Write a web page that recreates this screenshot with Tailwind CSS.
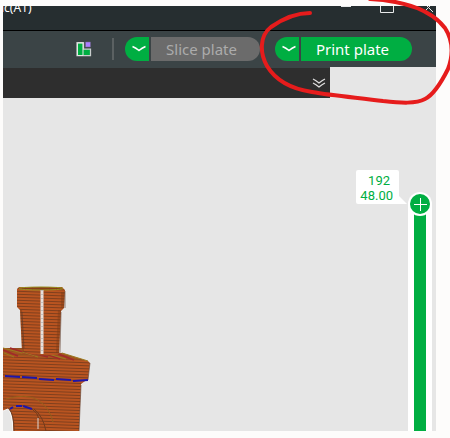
<!doctype html>
<html lang="en">
  <head>
    <meta charset="UTF-8" />
    <title>Print plate</title>
    <meta name="viewport" content="width=device-width, initial-scale=1.0" />
    <script src="https://cdn.jsdelivr.net/npm/@tailwindcss/browser@4"></script>
  </head>
  <body
    class="relative flex min-h-screen flex-col overflow-hidden bg-[#fdfcfb] pt-1.5 pr-3.5 pb-[7px] pl-[3px] font-['Noto_Sans',sans-serif]"
  >
    <div class="flex grow flex-col overflow-hidden bg-[#e6e6e6]">
      <header
        class="flex h-[25px] items-start justify-between overflow-hidden border-b border-black bg-[#262e30] text-white"
      >
        <h1 class="-mt-2 -ml-0.5 text-xs leading-5">ic(A1)</h1>
        <div class="flex gap-7">
          <button type="button" aria-label="Minimize">
            <svg class="block h-2 w-3" viewBox="0 0 12 8" fill="none" stroke="#e8eaea">
              <path d="M1 .5h10" />
            </svg>
          </button>
          <button type="button" aria-label="Maximize">
            <svg class="block h-2 w-3.5" viewBox="0 0 14 8" fill="none" stroke="#e8eaea">
              <path d="M.5 0v6.500h13V0" />
            </svg>
          </button>
          <button type="button" aria-label="Close" class="pr-0.5">
            <svg class="block h-2 w-3" viewBox="0 0 12 8" fill="none" stroke="#e8eaea">
              <path d="M2 6L6.500 1.500L11 6M5 0L6.500 1.500L8 0" />
            </svg>
          </button>
        </div>
      </header>

      <div class="flex h-9 items-center justify-end bg-[#3b4446] pr-6">
        <button type="button" aria-label="Assembly layout" class="mr-5">
          <svg class="block h-4 w-4" viewBox="0 0 16 16">
            <path
              d="M1 1.500h6.500v6.500h7v6.500H1z"
              fill="#00ae42"
              stroke="#c9cdcd"
              stroke-width="1.250"
            />
            <path d="M7 2v12.500H1.500V2z" fill="none" stroke="#e4e8e6" />
            <path d="M9.500 1h5v5h-5z" fill="#ac7cff" stroke="#6c6582" stroke-width=".5" />
          </svg>
        </button>
        <span class="mr-[11px] h-[22px] w-0.5 bg-[#5b6162]"></span>

        <div class="mr-[15px] flex h-6 gap-0.5">
          <button
            type="button"
            aria-label="Slice options"
            class="flex w-6 items-center justify-center rounded-l-full bg-[#00ae42]"
          >
            <svg class="ml-1 h-2 w-3.5" viewBox="0 0 14 8" fill="none" stroke="#fff" stroke-width="1.500">
              <path d="M.5 1.500Q4 3 7 5.500Q10 3 13.500 1.500" />
            </svg>
          </button>
          <button
            type="button"
            disabled
            class="w-[109px] rounded-r-full bg-[#6b6b6b] pr-2 text-[15px] leading-6 text-[#acacac]"
          >
            Slice plate
          </button>
        </div>

        <div class="flex h-6 gap-0.5">
          <button
            type="button"
            aria-label="Print options"
            class="flex w-6 items-center justify-center rounded-l-full bg-[#00ae42]"
          >
            <svg class="ml-1 h-2 w-3.5" viewBox="0 0 14 8" fill="none" stroke="#fff" stroke-width="1.500">
              <path d="M.5 1.500Q4 3 7 5.500Q10 3 13.500 1.500" />
            </svg>
          </button>
          <button
            type="button"
            class="w-[111px] rounded-r-full bg-[#00ae42] pr-2 text-[15px] leading-6 text-white"
          >
            Print plate
          </button>
        </div>
      </div>

      <div
        class="mr-[106px] flex h-[31px] items-center justify-end border-t border-[#3b4446] bg-[#2e2e2e] pr-1"
      >
        <button type="button" aria-label="Expand">
          <svg class="block h-3 w-3.5" viewBox="0 0 14 12" fill="none" stroke="#dedede" stroke-width="1.250">
            <path d="M1 2Q4 3.500 7 6Q10 3.500 13 2M1 6Q4 7.500 7 10Q10 7.500 13 6" />
          </svg>
        </button>
      </div>

      <main class="flex grow justify-between">
        <svg class="h-[146px] w-[90px] self-end" viewBox="3 285 90 146">
          <defs>
            <pattern id="layers" width="90" height="3" patternUnits="userSpaceOnUse" patternTransform="rotate(2)">
              <path d="M0 0h90v3H0z" fill="#b95420" />
              <path d="M0 2.500h90" stroke="#803f1d" />
            </pattern>
          </defs>
          <!-- tower body with the arch opening at the left edge -->
          <path
            d="M3 348L22 348L62 353L88 361L90 363L88 379L81 384L79 431H13Q14 412 8 409L3 411z"
            fill="url(#layers)"
          />
          <path d="M3 411L8 409Q12 412 13 431" fill="none" stroke="#f8f8f8" />
          <path d="M9 409Q14 414 14 431" fill="none" stroke="#6b3a20" />
          <!-- roof -->
          <path d="M3 348L22 348L62 353L86 361L50 358L3 355z" fill="#9a5520" opacity=".7" />
          <path d="M3 350L18 356M10 348L35 356M36 354L48 357M46 354L60 359M58 354L74 360" stroke="#a2282b" stroke-width="1.500" />
          <path d="M3 348L22 353M4 353L14 357M22 352L38 357M48 354L66 359M62 353L88 361" stroke="#9c7b20" />
          <!-- chimney -->
          <path d="M17 289L19 287H62L65 290L64 308L61 311L59 354Q40 358 22 351L20 310L17 307z" fill="url(#layers)" />
          <path d="M58 310H61L59 353H56zM61 292H65L64 308H61zM20 310H22L24 351H22z" fill="#783914" opacity=".4" />
          <ellipse cx="41" cy="288.500" rx="22" ry="1.500" fill="#873d18" stroke="#969022" />
          <path d="M42 290V354" stroke="#e7e0dc" stroke-width="3" />
          <path d="M42 290V354" stroke="#a5a09e" stroke-width="3" stroke-dasharray="1 3" opacity=".5" />
          <path d="M65 291V308M61 312L60 352M90 363L88 380M81 385L79 431M22 312L24 348" fill="none" stroke="#5f3c2b" stroke-opacity=".6" />
          <!-- seams -->
          <path d="M5 376L20 377M22 377L37 378M39 379L54 380M56 379L71 380M73 381L88 380" stroke="#1e16aa" stroke-width="2" />
          <path d="M10 409L13 407M16 406H22M23 406L32 409" stroke="#1e16aa" stroke-width="2" />
          <path d="M6 399Q26 393 38 400Q50 408 53 422" fill="none" stroke="#98611b" />
          <path d="M32 409Q38 413 39 419M34 409Q43 416 46 431" fill="none" stroke="#733b1c" />
          <path d="M38 418V429" stroke="#ddd7d3" />
        </svg>

        <div class="flex pt-[72px] pr-1">
          <output
            for="layer"
            class="relative mr-[9px] flex h-[34px] w-[43px] flex-col rounded-t-xs rounded-bl-xs bg-white pt-[3px] pr-1.5 text-right font-[Roboto,sans-serif] text-[13px] leading-[15px] text-[#00ae42]"
          >
            <span class="pr-[3px]">192</span>
            <span>48.00</span>
            <svg class="absolute bottom-0 left-full h-2 w-2" viewBox="0 0 8 8">
              <path d="M0 0L8 8H0z" fill="#fff" />
            </svg>
          </output>
          <div class="relative flex w-6 flex-col items-center pt-[22px]">
            <span
              class="z-10 flex h-6 w-6 shrink-0 items-center justify-center rounded-full bg-white"
            >
              <svg class="h-5 w-5" viewBox="0 0 20 20">
                <circle cx="10" cy="10" r="10" fill="#00ae42" />
                <path d="M4 10.500h13M10.500 4v13" stroke="#fff" />
              </svg>
            </span>
            <div class="-mt-3 flex w-6 grow justify-center bg-white">
              <div class="w-3 bg-[#00ae42]"></div>
            </div>
            <input
              id="layer"
              type="range"
              min="1"
              max="192"
              value="192"
              aria-label="Layer"
              class="absolute inset-0 z-20 h-full w-full opacity-0 [direction:rtl] [writing-mode:vertical-lr]"
            />
          </div>
        </div>
      </main>
    </div>

    <!-- hand-drawn ring round the print button -->
    <svg
      class="pointer-events-none absolute top-0 right-0 h-[110px] w-[200px]"
      viewBox="250 0 200 110"
      fill="none"
      stroke="#e61c1c"
      stroke-width="4"
      stroke-linecap="round"
    >
      <path
        d="M310 13C294 13 281 20 271 27C259 36 260 54 267 66C276 81 292 89 312 92C334 96 362 98 383 101C401 103 416 104 425 99C435 94 443 79 448 69C454 53 452 39 445 28C432 11 406 1 370 -1"
      />
    </svg>
  </body>
</html>
